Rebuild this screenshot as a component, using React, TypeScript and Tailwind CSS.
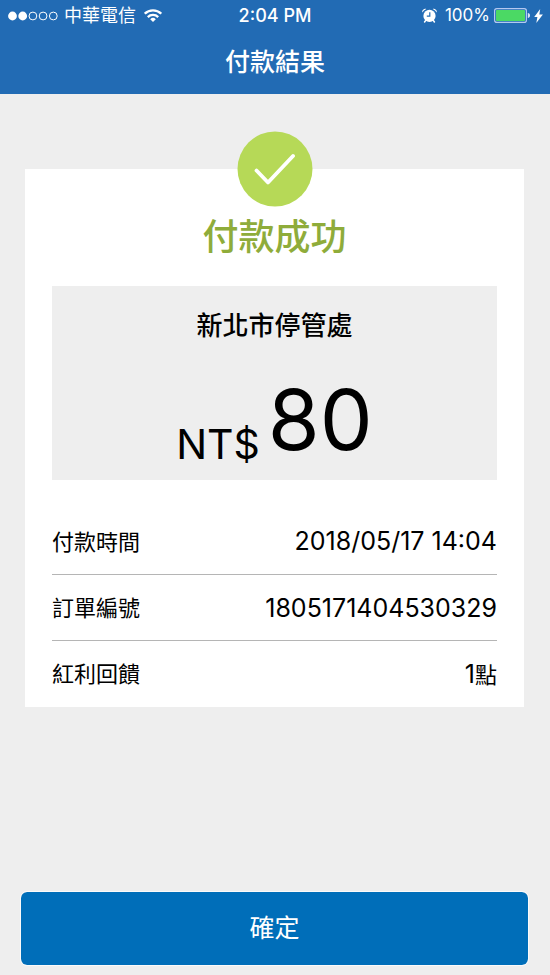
const details = [
  { label: "付款時間", value: "2018/05/17 14:04" },
  { label: "訂單編號", value: "1805171404530329" },
  { label: "紅利回饋", value: "1", unit: "點" },
];

const SignalDots = () => (
  <svg viewBox="0 0 51 10" className="h-[10px] w-[51px]" aria-hidden="true">
    <circle cx="5.5" cy="5" r="4.4" fill="#fff" />
    <circle cx="15.7" cy="5" r="4.4" fill="#fff" />
    <circle cx="25.9" cy="5" r="3.9" fill="none" stroke="#fff" strokeWidth="1" />
    <circle cx="36.1" cy="5" r="3.9" fill="none" stroke="#fff" strokeWidth="1" />
    <circle cx="46.3" cy="5" r="3.9" fill="none" stroke="#fff" strokeWidth="1" />
  </svg>
);

const WifiIcon = () => (
  <svg viewBox="0 0 18 13" className="h-[13px] w-[18px]" fill="none" stroke="#fff" strokeWidth="2.3" aria-hidden="true">
    <path d="M0.8 4.7a11.6 11.6 0 0 1 16.4 0" />
    <path d="M3.8 8.1a7.4 7.4 0 0 1 10.4 0" />
    <path d="M9 13l-2.8-2.8a4 4 0 0 1 5.6 0z" fill="#fff" stroke="none" />
  </svg>
);

const AlarmIcon = () => (
  <svg viewBox="0 0 15 15" className="h-[15px] w-[15px]" aria-hidden="true">
    <circle cx="7.5" cy="7.9" r="6.1" fill="#fff" />
    <path d="M0.3 4.6A7.8 7.8 0 0 1 4.3 0.9C2.3 0 -0.4 2 0.3 4.6zM14.7 4.6A7.8 7.8 0 0 0 10.7 0.9C12.7 0 15.4 2 14.7 4.6z" fill="#fff" />
    <path d="M3.7 12.4l-1.1 1.6M11.3 12.4l1.1 1.6" stroke="#fff" strokeWidth="1.5" strokeLinecap="round" />
    <path d="M7.8 4.2v4H4.8" fill="none" stroke="#226bb4" strokeWidth="1.2" />
  </svg>
);

const BatteryIcon = () => (
  <svg viewBox="0 0 36 15" className="h-[15px] w-[36px]" aria-hidden="true">
    <rect x="0.6" y="0.6" width="31.8" height="13.8" rx="2.2" fill="none" stroke="#b4c8f0" strokeWidth="1.2" />
    <rect x="2" y="2" width="29" height="11" rx="0.8" fill="#4bd964" />
    <path d="M33.8 5c1.5.3 2.2 1.2 2.2 2.5s-.7 2.2-2.2 2.5z" fill="#dbe6f7" />
  </svg>
);

const BoltIcon = () => (
  <svg viewBox="0 0 9 14" className="h-[14px] w-[9px]" aria-hidden="true">
    <path d="M6.2 0L0.2 8h3.2L2.3 14 8.9 5.6H5.3z" fill="#fff" />
  </svg>
);

const StatusBar = () => (
  <div className="grid h-[31px] grid-cols-[1fr_auto_1fr] items-center px-[7px] text-[18px] leading-[31px]">
    <div className="flex items-center gap-2">
      <div className="flex items-center gap-[6px]">
        <SignalDots />
        <span>中華電信</span>
      </div>
      <WifiIcon />
    </div>
    <span className="font-medium">2:04 PM</span>
    <div className="flex items-center justify-end gap-1">
      <div className="flex items-center gap-2">
        <AlarmIcon />
        <span className="text-[17px]">100%</span>
      </div>
      <BatteryIcon />
      <BoltIcon />
    </div>
  </div>
);

const DetailRow = ({ label, value, unit }: { label: string; value: string; unit?: string }) => (
  <div className="flex h-[66px] items-center justify-between border-t border-[#b5b5b5] pt-0.5 text-[22px] first:border-t-0">
    <dt>{label}</dt>
    <dd>
      <span className="text-[25px]">{value}</span>
      {unit}
    </dd>
  </div>
);

const App = () => {
  return (
    <div className="flex min-h-screen flex-col bg-[#eeeeee] font-['Inter','Noto_Sans_CJK_TC',sans-serif] text-black">
      <header className="bg-[#226bb4] text-white">
        <StatusBar />
        <h1 className="text-center text-[25px] leading-[63px] font-medium">付款結果</h1>
      </header>

      <main className="flex-1 pt-[75px] pr-[26px] pl-[25px]">
        <section className="relative bg-white px-[27px] pt-[44px] pb-px">
          <div className="absolute -top-[38px] left-1/2 -translate-x-1/2">
            <svg viewBox="0 0 76 76" className="h-[76px] w-[76px]" aria-hidden="true">
              <circle cx="38" cy="38" r="37.5" fill="#b6d957" />
              <path d="M19.5 39.5L31 51.5L56 25" fill="none" stroke="#fff" strokeWidth="3.8" strokeLinecap="round" strokeLinejoin="round" />
            </svg>
          </div>
          <h2 className="text-center text-[36px] leading-[48px] font-medium text-[#8fac3a]">付款成功</h2>

          <div className="mt-[25px] h-[194px] bg-[#eeeeee] pt-5 text-center">
            <p className="text-[26px] leading-[40px] font-medium">新北市停管處</p>
            <p className="mt-8 flex items-end justify-center gap-2">
              <span className="text-[41px] leading-[44px]">NT$</span>
              <span className="pb-1 text-[84px] leading-[84px]">80</span>
            </p>
          </div>

          <dl className="mt-[28px]">
            {details.map((row) => (
              <DetailRow key={row.label} label={row.label} value={row.value} unit={row.unit} />
            ))}
          </dl>
        </section>
      </main>

      <footer className="pr-[22px] pb-[10px] pl-[21px]">
        <button
          type="button"
          className="h-[73px] w-full rounded-[6px] bg-[#006eb9] text-[25px] text-white outline outline-white/70"
        >
          確定
        </button>
      </footer>
    </div>
  );
};

export default App;
